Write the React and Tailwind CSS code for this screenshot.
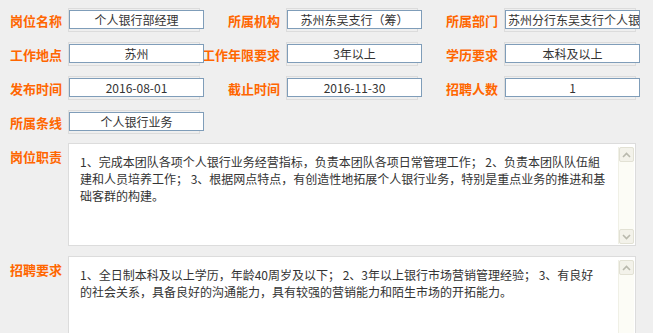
import React from "react";

const font = { fontFamily: '"Noto Sans CJK SC", "Noto Sans", sans-serif' };

function Label({ children, className = "" }) {
  return (
    <div
      className={`flex items-center justify-end pr-[6px] text-[13px] font-bold text-[#ff6600] whitespace-nowrap leading-none ${className}`}
    >
      {children}
    </div>
  );
}

function Field({ value, left = false }) {
  return (
    <div className="relative h-[24px] border border-[#dcdcdc]">
      <input
        readOnly
        value={value}
        className={`mt-[1px] block h-[19px] w-[135px] border border-[#7f9db9] bg-white text-[12px] leading-none text-[#333] outline-none ${
          left ? "text-left pl-[2px]" : "text-center"
        }`}
        style={font}
      />
    </div>
  );
}

function Arrow({ up }) {
  return (
    <svg width="9" height="6" viewBox="0 0 9 6">
      <path
        d={up ? "M1 5 L4.5 1.5 L8 5" : "M1 1 L4.5 4.5 L8 1"}
        fill="none"
        stroke="#b9b9ad"
        strokeWidth="1.6"
      />
    </svg>
  );
}

function Scrollbar() {
  return (
    <div className="absolute right-[1px] top-[3px] bottom-[1px] flex w-[16px] flex-col justify-between border-l border-[#f0f0e6] bg-[#fcfcf6]">
      <div className="flex h-[15px] items-center justify-center rounded-[2px] border border-[#e2e1d4] bg-[#f3f2ea]">
        <Arrow up />
      </div>
      <div className="flex h-[15px] items-center justify-center rounded-[2px] border border-[#e2e1d4] bg-[#f3f2ea]">
        <Arrow />
      </div>
    </div>
  );
}

function TextBox({ lines, height }) {
  return (
    <div
      className="relative w-[568px] shrink-0 border border-[#dcdcdc] bg-white"
      style={{ height }}
    >
      <div className="pl-[11px] pt-[9px] text-[12px] leading-[17px] text-[#333]">
        {lines.map((l, i) => (
          <div key={i} className="whitespace-nowrap">
            {l}
          </div>
        ))}
      </div>
      <Scrollbar />
    </div>
  );
}

export default function App() {
  return (
    <div className="h-[333px] w-[653px] overflow-hidden bg-[#efefef]" style={font}>
      <div className="grid grid-cols-[68px_132px_86px_132px_86px_132px] gap-y-[10px] pt-[8px]">
        <Label>岗位名称</Label>
        <Field value="个人银行部经理" />
        <Label>所属机构</Label>
        <Field value="苏州东吴支行（筹）" />
        <Label>所属部门</Label>
        <Field value="苏州分行东吴支行个人银行部" left />

        <Label>工作地点</Label>
        <Field value="苏州" />
        <Label>工作年限要求</Label>
        <Field value="3年以上" />
        <Label>学历要求</Label>
        <Field value="本科及以上" />

        <Label>发布时间</Label>
        <Field value="2016-08-01" />
        <Label>截止时间</Label>
        <Field value="2016-11-30" />
        <Label>招聘人数</Label>
        <Field value="1" />

        <Label>所属条线</Label>
        <Field value="个人银行业务" />
        <div />
        <div />
        <div />
        <div />
      </div>

      <div className="mt-[9px] flex">
        <Label className="w-[68px] shrink-0 items-start pt-[7px]">岗位职责</Label>
        <TextBox
          height={103}
          lines={[
            "1、完成本团队各项个人银行业务经营指标，负责本团队各项日常管理工作； 2、负责本团队队伍組",
            "建和人员培养工作； 3、根据网点特点，有创造性地拓展个人银行业务，特别是重点业务的推进和基",
            "础客群的构建。",
          ]}
        />
      </div>

      <div className="mt-[10px] flex">
        <Label className="w-[68px] shrink-0 items-start pt-[7px]">招聘要求</Label>
        <TextBox
          height={103}
          lines={[
            "1、全日制本科及以上学历，年龄40周岁及以下； 2、3年以上银行市场营销管理经验； 3、有良好",
            "的社会关系，具备良好的沟通能力，具有较强的营销能力和陌生市场的开拓能力。",
          ]}
        />
      </div>
    </div>
  );
}
